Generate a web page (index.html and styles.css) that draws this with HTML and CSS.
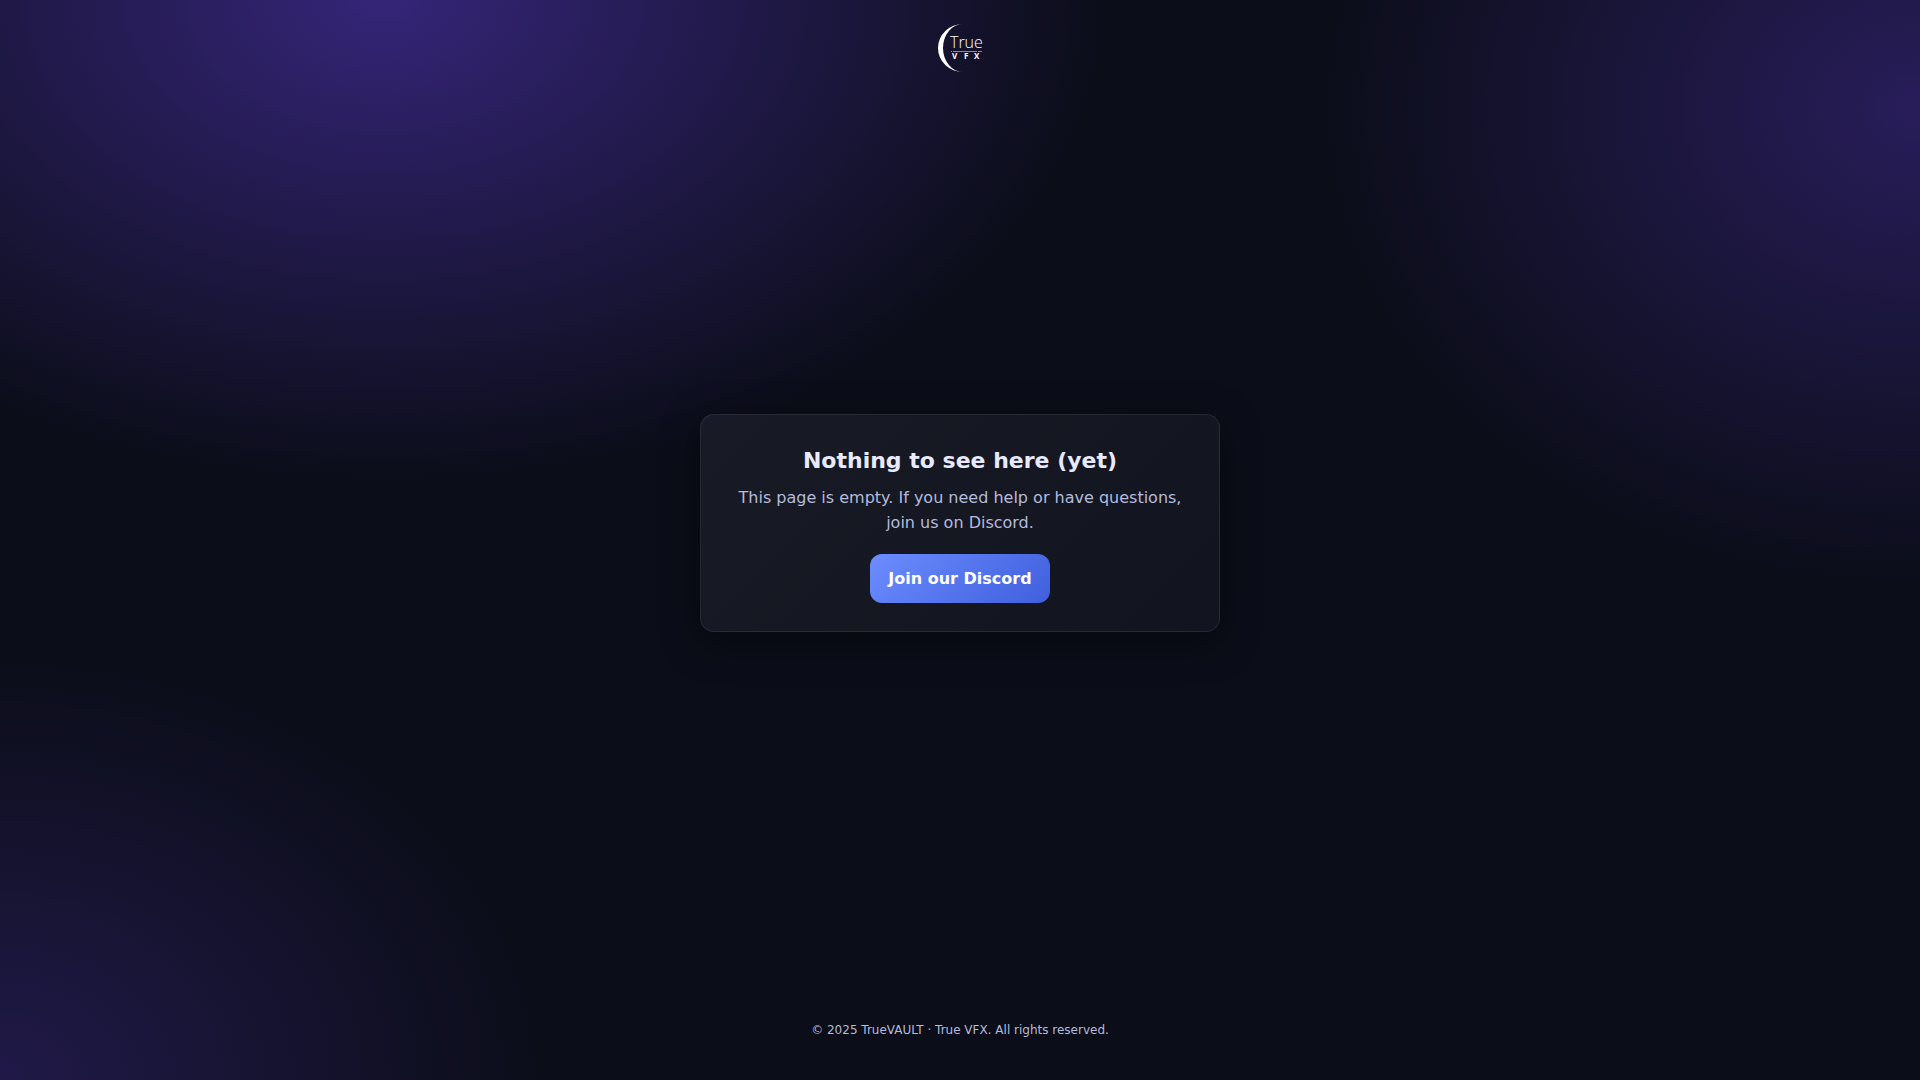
FILE: index.html
```
<!DOCTYPE html>
<html lang="en">
<head>
  <meta charset="UTF-8">
  <meta name="viewport" content="width=device-width, initial-scale=1.0">
  <title>TrueVAULT</title>
  <link rel="stylesheet" href="styles.css">
</head>
<body>
  <header class="site-header">
    <svg class="logo" viewBox="0 0 48 48" role="img" aria-label="True VFX">
      <path class="logo-moon" d="M27 0 A25 24 0 0 0 27 48 A20 24 0 0 1 27 0 Z"/>
      <text class="logo-name" x="14" y="24">True</text>
      <path class="logo-line" d="M15 27.5H16 M17 27.5H41 M42 27.5H46"/>
      <text class="logo-sub" y="35"><tspan x="16">V</tspan><tspan x="28">F</tspan><tspan x="38">X</tspan></text>
    </svg>
  </header>

  <main class="content">
    <section class="card">
      <h1 class="card-title">Nothing to see here (yet)</h1>
      <p class="card-text">This page is empty. If you need help or have questions, join us on Discord.</p>
      <a class="btn" href="#">Join our Discord</a>
    </section>
  </main>

  <footer class="site-footer">© 2025 TrueVAULT · True VFX. All rights reserved.</footer>
</body>
</html>
```
FILE: styles.css
```
* {
  box-sizing: border-box;
}

body {
  margin: 0;
  min-height: 100vh;
  display: flex;
  flex-direction: column;
  font-family: "DejaVu Sans", sans-serif;
  font-size: 16px;
  color: #e8eaff;
  background:
    radial-gradient(1200px 800px at 20% 0%, #352578 0%, transparent 61%),
    radial-gradient(1000px 800px at 100% 10%, #281d5a 0%, transparent 61%),
    radial-gradient(900px 700px at 0% 100%, #201948 0%, transparent 62%),
    #0b0d18;
}

.site-header {
  display: flex;
  justify-content: center;
  padding: 24px;
}

.logo {
  width: 48px;
  height: 48px;
  fill: #fff;
}

.logo-name {
  font: 300 16px "Open Sans", sans-serif;
}

.logo-sub {
  font: bold 8px "Open Sans", sans-serif;
}

.logo-line {
  stroke: #8a8aa5;
  stroke-width: 1;
}

.content {
  flex: 1;
  display: flex;
  align-items: center;
  justify-content: center;
  padding: 24px;
}

.card {
  width: 100%;
  max-width: 520px;
  padding: 28px;
  text-align: center;
  border: 1px solid rgba(255, 255, 255, 0.08);
  border-radius: 14px;
  background: linear-gradient(135deg, rgba(240, 240, 255, 0.06), rgba(240, 240, 255, 0.03));
  box-shadow: 0 10px 40px rgba(0, 0, 0, 0.4);
}

.card-title {
  margin: 0 0 7px;
  font-size: 22px;
  line-height: 35px;
}

.card-text {
  margin: 0 0 19px;
  line-height: 25px;
  color: #b4bbdd;
}

.btn {
  display: inline-block;
  padding: 12px 18px;
  border-radius: 12px;
  font-weight: bold;
  line-height: 25px;
  color: #fff;
  text-decoration: none;
  background: linear-gradient(135deg, #6c8cff, #3f5fdd);
}

.site-footer {
  margin-top: 30px;
  padding: 40px 24px;
  text-align: center;
  font-size: 12px;
  line-height: 20px;
  color: #b4bbdd;
}
```
